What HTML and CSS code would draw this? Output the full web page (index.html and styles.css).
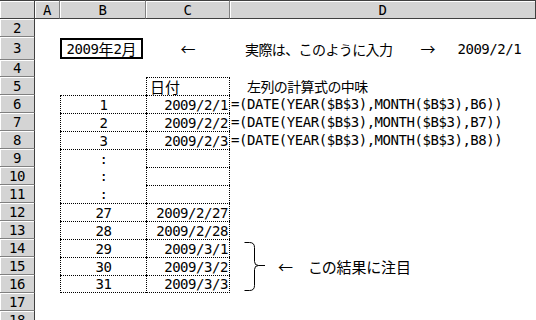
FILE: index.html
```html
<!DOCTYPE html>
<html lang="ja">
<head>
<meta charset="utf-8">
<link rel="stylesheet" href="styles.css">
</head>
<body>
<div class="sheet">
  <div class="corner"></div>
  <div class="ch">A</div><div class="ch">B</div><div class="ch">C</div><div class="ch chl">D</div>

  <div class="rh">2</div><div></div><div></div><div></div><div></div>

  <div class="rh">3</div><div></div>
  <div class="boxcell"><div class="box">2009<span class="j">年</span>2<span class="j">月</span></div></div>
  <div class="cen"><span class="j">←</span></div>
  <div class="d3"><span class="j w">実際は、このように入力</span><span class="j arr">→</span>2009/2/1</div>

  <div class="rh">4</div><div></div><div></div><div></div><div></div>

  <div class="rh">5</div><div></div><div></div>
  <div class="t tc lft"><span class="j">日付</span></div>
  <div class="d5"><span class="j w">左列の計算式の中味</span></div>

  <div class="rh">6</div><div></div><div class="t cen">1</div><div class="t tc num">2009/2/1</div><div class="f">=(DATE(YEAR($B$3),MONTH($B$3),B6))</div>
  <div class="rh">7</div><div></div><div class="t cen">2</div><div class="t tc num">2009/2/2</div><div class="f">=(DATE(YEAR($B$3),MONTH($B$3),B7))</div>
  <div class="rh">8</div><div></div><div class="t cen">3</div><div class="t tc num">2009/2/3</div><div class="f">=(DATE(YEAR($B$3),MONTH($B$3),B8))</div>
  <div class="rh">9</div><div></div><div class="t cen">:</div><div class="t tc num"></div><div></div>
  <div class="rh">10</div><div></div><div class="t nt cen">:</div><div class="t tc num"></div><div></div>
  <div class="rh">11</div><div></div><div class="t nt cen">:</div><div class="t tc num"></div><div></div>
  <div class="rh">12</div><div></div><div class="t cen">27</div><div class="t tc num">2009/2/27</div><div></div>
  <div class="rh">13</div><div></div><div class="t cen">28</div><div class="t tc num">2009/2/28</div><div></div>
  <div class="rh">14</div><div></div><div class="t cen">29</div><div class="t tc num">2009/3/1</div>
  <div class="note">
    <svg class="brace" width="22" height="52" viewBox="0 0 22 52">
      <path d="M0.5 2.5 H5.5 Q10.5 2.5 10.5 7.5 V21.5 Q10.5 25.5 14.5 25.5 H21 M14.5 25.5 Q10.5 25.5 10.5 29.5 V45.5 Q10.5 50.5 5.5 50.5 H0.5" fill="none" stroke="#000" stroke-width="1"/>
    </svg>
    <span class="j narr">←</span>
    <span class="j">この結果に注目</span>
  </div>
  <div class="rh">15</div><div></div><div class="t cen">30</div><div class="t tc num">2009/3/2</div>
  <div class="rh">16</div><div></div><div class="t tb cen">31</div><div class="t tc tb num">2009/3/3</div>
  <div class="rh">17</div><div></div><div></div><div></div><div></div>
  <div class="rh">18</div><div></div><div></div><div></div><div></div>
</div>
</body>
</html>
```

FILE: styles.css
```css
html, body {
  margin: 0;
  padding: 0;
  background: #fff;
}
body {
  width: 536px;
  height: 320px;
  overflow: hidden;
}
.sheet {
  display: grid;
  grid-template-columns: 35px 25px 86px 84px 306px;
  grid-template-rows: 19px 18px 23px 17px 18px repeat(13, 18px);
  font-family: "DejaVu Sans Mono", "Noto Sans CJK JP", monospace;
  font-size: 14px;
  letter-spacing: -0.45px;
  line-height: 1;
  color: #000;
}
.sheet > div {
  box-sizing: border-box;
  display: flex;
  align-items: center;
  white-space: nowrap;
  min-width: 0;
}
.j {
  font-family: "Noto Sans CJK JP", sans-serif;
  font-size: 15px;
  letter-spacing: 0;
  font-feature-settings: "palt";
}
.j.w {
  font-size: 14px;
  letter-spacing: -0.6px;
  font-feature-settings: normal;
}
.corner, .ch, .rh {
  background: #d4d4d4;
  box-shadow: inset 1px 1px 0 #fff;
  justify-content: center;
}
.corner, .ch {
  border-top: 1px solid #404040;
  border-bottom: 1px solid #404040;
  border-right: 1px solid #808080;
}
.corner {
  border-right: 1px solid #404040;
}
.ch.chl {
  border-right: 1px solid #404040;
}
.rh {
  border-bottom: 1px solid #808080;
  border-right: 1px solid #404040;
}
.cen {
  justify-content: center;
}
.boxcell {
  padding: 1px 3px 1px 0;
}
.box {
  box-sizing: border-box;
  width: 100%;
  height: 100%;
  border: 2px solid #000;
  display: flex;
  align-items: center;
  justify-content: center;
}
.d3 {
  padding-left: 15px;
}
.d3 .arr {
  margin: 0 22px 0 28px;
}
.d5 {
  padding-left: 17px;
}
.t {
  border-left: 1px dotted #000;
  border-top: 1px dotted #000;
}
.t.nt {
  border-top: none;
}
.tc {
  border-right: 1px dotted #000;
}
.tb {
  border-bottom: 1px dotted #000;
}
.lft {
  padding-left: 3px;
}
.num {
  justify-content: flex-end;
  padding-right: 1px;
}
.f {
  padding-left: 1px;
}
.note {
  grid-row: span 3;
  padding-left: 14px;
}
.brace {
  display: block;
  flex: none;
}
.narr {
  margin: 0 16px 0 12px;
}
```
